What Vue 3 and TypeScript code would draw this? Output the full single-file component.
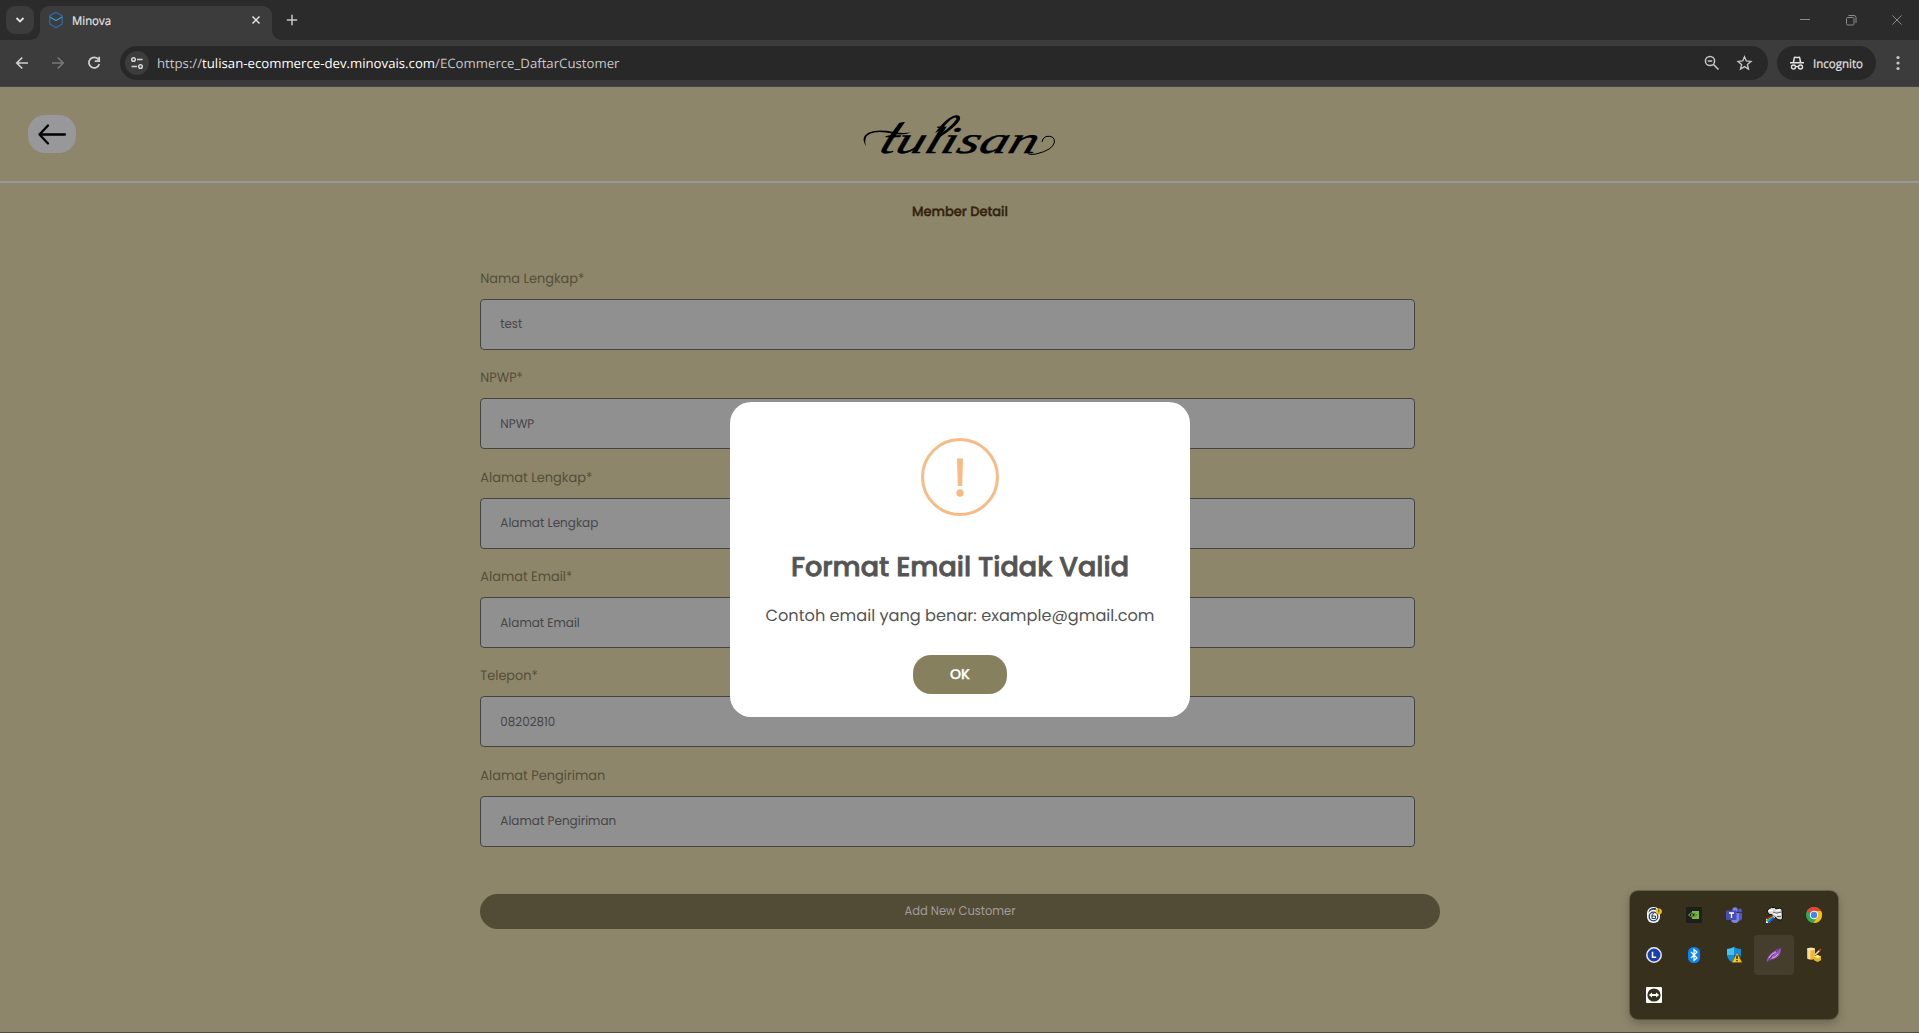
<script setup lang="ts">
interface Field { label: string; value: string; lw: number; vw: number }
const fields: Field[] = [
  { label: 'Nama Lengkap*', value: 'test', lw: 104, vw: 22 },
  { label: 'NPWP*', value: 'NPWP', lw: 42.5, vw: 34 },
  { label: 'Alamat Lengkap*', value: 'Alamat Lengkap', lw: 112, vw: 98 },
  { label: 'Alamat Email*', value: 'Alamat Email', lw: 92, vw: 79.5 },
  { label: 'Telepon*', value: '08202810', lw: 57.5, vw: 55 },
  { label: 'Alamat Pengiriman', value: 'Alamat Pengiriman', lw: 125, vw: 116 },
]
</script>

<template>
  <div class="screen">
    <div class="tabs">
      <div class="tabsearch"><svg width="10" height="8" viewBox="0 0 10 8"><path d="M1.5 2 5 5.5 8.5 2" fill="none" stroke="#e3e3e3" stroke-width="1.8" /></svg></div>
      <div class="tab">
        <svg class="fav" width="16" height="18" viewBox="0 0 16 18"><path d="M8 1.300 14.200 4.800v8.200L8 16.700 1.800 13V4.800Z" fill="none" stroke="#2f6da8" stroke-width="1.200" /><path d="M2 6 8 9.500 14 6" fill="none" stroke="#2f9ac6" stroke-width="1.300" /></svg>
        <svg class="tt" width="42" height="20"><text x="0" y="15" textLength="39" lengthAdjust="spacingAndGlyphs">Minova</text></svg>
        <svg class="x" width="10" height="10" viewBox="0 0 10 10"><path d="m1.500 1.500 7 7m0-7-7 7" stroke="#e3e3e3" stroke-width="1.500" /></svg>
      </div>
      <svg class="plus" width="12" height="12" viewBox="0 0 12 12"><path d="M6 .8v10.400M.8 6h10.400" stroke="#c7c7c7" stroke-width="1.500" /></svg>
      <svg class="wins" width="104" height="14" viewBox="0 0 104 14" fill="none" stroke="#8b8b8b"><path d="M1 6.500h10" /><rect x="47.500" y="4.500" width="7.500" height="7.500" rx="1.200" /><path d="M49.500 2.500h5.500q2 0 2 2v5.500M93.500 2.500l9 9m0-9-9 9" /></svg>
    </div>
    <div class="toolbar">
      <svg class="nav" width="108" height="24" viewBox="0 0 108 24" fill="none" stroke-width="1.700">
        <path d="M28 12H16.800M22.300 6.500 16.800 12l5.500 5.500" stroke="#d0d0d0" />
        <path d="M52 12h11.200M57.700 6.500 63.200 12l-5.500 5.500" stroke="#777" />
        <path d="M98.500 8.500A5.300 5.300 0 1 0 99.300 13M99.200 5.800v4.400h-4.400" stroke="#d0d0d0" />
      </svg>
      <div class="omni">
        <div class="tune"><svg width="14" height="14" viewBox="0 0 14 14" fill="none" stroke="#d5d5d5" stroke-width="1.500"><circle cx="3.500" cy="3.500" r="1.800" /><path d="M7 3.500h5.500M1.500 10.500H7" /><circle cx="10.500" cy="10.500" r="1.800" /></svg></div>
        <svg class="url" width="480" height="24"><text x="0" y="17" textLength="462.500" lengthAdjust="spacingAndGlyphs"><tspan fill="#c7c7c7">https://</tspan><tspan fill="#fff">tulisan-ecommerce-dev.minovais.com</tspan><tspan fill="#c7c7c7">/ECommerce_DaftarCustomer</tspan></text></svg>
        <svg class="omniicons" width="48" height="16" viewBox="0 0 48 16" fill="none" stroke="#c7c7c7" stroke-width="1.500"><circle cx="6" cy="6" r="4.600" /><path d="M3.800 6h4.400M9.500 9.500l5 5" /><path d="m40.500 1.700 1.800 4.300 4.700.4-3.600 3.100 1.100 4.600-4-2.500-4 2.500 1.100-4.600L34 6.400l4.700-.4Z" stroke-width="1.300" /></svg>
      </div>
      <div class="incog">
        <svg width="14" height="14" viewBox="0 0 14 14"><path d="M3.700 1.200Q4 .2 5 .5q2 .6 4 0 1-.3 1.300.7L11.300 6H14v1.400H0V6h2.700Z M5 2 4.300 6h5.400L9 2Q7 2.400 5 2Z" fill="#e3e3e3" fill-rule="evenodd" /><g fill="none" stroke="#e3e3e3" stroke-width="1.400"><circle cx="3.500" cy="11" r="2" /><circle cx="10.500" cy="11" r="2" /><path d="M5.500 10.800q1.500-.9 3 0" /></g></svg>
        <svg class="it" width="52" height="20"><text x="0" y="14.500" textLength="50" lengthAdjust="spacingAndGlyphs">Incognito</text></svg>
      </div>
      <svg class="dots" width="4" height="16" viewBox="0 0 4 16" fill="#c7c7c7"><circle cx="2" cy="2.500" r="1.600" /><circle cx="2" cy="8" r="1.600" /><circle cx="2" cy="13.500" r="1.600" /></svg>
    </div>

    <header class="head">
      <div class="back"><svg width="30" height="22" viewBox="0 0 30 22"><path d="M28 11.500H2.500M11 2.500 2.500 11.500l8.500 9" fill="none" stroke="#000" stroke-width="2.300" stroke-linecap="round" stroke-linejoin="round" /></svg></div>
      <svg class="logo" width="196" height="48" viewBox="0 0 196 48">
        <g transform="translate(16 40) skewX(-18)"><text x="0" y="0" textLength="157" lengthAdjust="spacingAndGlyphs">tulisan</text></g>
        <!-- flourishes around the wordmark: crossbar, raised stems, trailing curl -->
        <path d="M4 33Q-2 24 7 19.500q8-3.500 25-.5 8 1.500 17 .5-8 3-18 1.200-15-3.200-23 0-7 3.300-4 12.300Z" />
        <path d="M27 24 37 10q3-1 6-1L32 25Z" />
        <path d="M73 20C80 10 88 3 94 2.200q5-.2 4 4Q95 13 78 24l-1-2Q90 13 94.500 6q0-2.500-3-1Q86 8 80 16Z" />
        <path d="M166 39q-1 3.500 8 2 17-4 18.500-12 0-7-8.500-5.500-4 2-4 5.500" fill="none" stroke="#000" stroke-width="1" />
      </svg>
    </header>

    <main>
      <svg class="heading" width="96" height="20"><text x="0" y="14.300" textLength="96" lengthAdjust="spacingAndGlyphs">Member Detail</text></svg>
      <form class="form">
        <div v-for="f in fields" :key="f.label" class="field">
          <svg class="label" width="200" height="24"><text x=".3" y="16.300" :textLength="f.lw" lengthAdjust="spacingAndGlyphs">{{ f.label }}</text></svg>
          <div class="input"><svg width="200" height="24"><text x=".3" y="16" :textLength="f.vw" lengthAdjust="spacingAndGlyphs">{{ f.value }}</text></svg></div>
        </div>
        <div class="submit"><svg width="114" height="20"><text x="1.500" y="14.300" textLength="111" lengthAdjust="spacingAndGlyphs">Add New Customer</text></svg></div>
      </form>
    </main>
    <div class="edge"></div>

    <div class="modal">
      <svg class="warn" width="78" height="78" viewBox="0 0 78 78"><circle cx="39" cy="39" r="37.500" fill="none" stroke="#f8bb86" stroke-width="3" /><path d="M36 20.500h6l-.8 27.500h-4.400Z" fill="#f8bb86" /><circle cx="39" cy="55" r="3.700" fill="#f8bb86" /></svg>
      <svg class="title" width="340" height="40"><text x="1" y="30" textLength="338" lengthAdjust="spacingAndGlyphs">Format Email Tidak Valid</text></svg>
      <svg class="msg" width="392" height="30"><text x="1.500" y="21" textLength="389" lengthAdjust="spacingAndGlyphs">Contoh email yang benar: example@gmail.com</text></svg>
      <div class="ok"><svg width="22" height="20"><text x="1" y="14" textLength="20" lengthAdjust="spacingAndGlyphs">OK</text></svg></div>
    </div>

    <div class="tray">
      <div class="cell"><svg width="16" height="16" viewBox="0 0 16 16"><rect x="1" y="0" width="13" height="16" rx="6" fill="#f4f6f8" /><path d="M2.500 5Q7 0 12 4M3 3.500q3-3 7-2" fill="none" stroke="#25406b" /><circle cx="7.500" cy="9.500" r="4.300" fill="none" stroke="#25406b" stroke-width="1.300" /><path d="M5.500 9h4v2.500H6V8q0-1.500 2-1.500" fill="none" stroke="#25406b" /><circle cx="12.800" cy="4.500" r="3" fill="#ffc107" /><path d="M12.800 2.500v2.300m0 .8v.8" stroke="#333" /></svg></div>
      <div class="cell"><svg width="16" height="16" viewBox="0 0 16 16"><path d="M0 0h16v16H0Z" fill="#1e1e1e" /><path d="M6 4h7v8H6Z" fill="#76b83f" /><path d="M2.500 8Q7 3 11.500 8 7 12.500 2.500 8Z" fill="#1e1e1e" stroke="#76b83f" stroke-width=".9" /><path d="M5 8q2.500-3 5 0-2.500 3-5 0Z" fill="none" stroke="#76b83f" /></svg></div>
      <div class="cell"><svg width="16" height="16" viewBox="0 0 16 16"><circle cx="9" cy="3" r="2.700" fill="#7b83eb" /><circle cx="14" cy="3.500" r="1.900" fill="#5059c9" /><path d="M11 6h5v5q0 3-4 3Z" fill="#5059c9" /><path d="M5 6h8v6q0 4-4 4t-4-4Z" fill="#7b83eb" /><rect y="3.500" width="10.500" height="9.500" rx="1" fill="#464eb8" /><path d="M3 6h5M5.500 6v5" stroke="#fff" stroke-width="1.300" /></svg></div>
      <div class="cell"><svg width="17" height="16" viewBox="0 0 17 16"><path d="M1.500 4.500V3l2-1.500 2-1h3l1.500 1.500 4-1 2 1.500.500 9-2 1.500-3-.500-1.500-2-2-.500-1.500-2-4-1Z" fill="#d8d8d8" stroke="#0a0a0a" stroke-width="1" /><path d="M3 3.500h4M10 3.500l4-.500M8 6.500l3 1.500M12 7h3" stroke="#fff" stroke-width="1.600" /><path d="M7 5l3 1.200 5-1M11 9.500h4" stroke="#333" stroke-width=".7" fill="none" /><path d="m0 12 7-3.500 2 2L3 16H0Z" fill="#fff" /><path d="m.5 12 6-3" stroke="#e02" stroke-width="1.400" /><path d="m.5 14 7-4" stroke="#0c3" stroke-width="1.700" /><path d="m2 15.500 6-4.500" stroke="#14f" stroke-width="1.600" /></svg></div>
      <div class="cell"><svg width="16" height="16" viewBox="0 0 16 16"><circle cx="8" cy="8" r="8" fill="#34a853" /><path d="M8 8 1.100 4A8 8 0 0 1 15 4Z" fill="#ea4335" /><path d="M8 4h7A8 8 0 0 1 7.500 16L11.500 10Z" fill="#fbbc04" /><circle cx="8" cy="8" r="4.200" fill="#fff" /><circle cx="8" cy="8" r="3.200" fill="#4285f4" /></svg></div>
      <div class="cell"><svg width="16" height="16" viewBox="0 0 16 16"><circle cx="8" cy="8" r="7.200" fill="#1d3fae" stroke="#e8ebf2" stroke-width="1.500" /><path d="M6.500 4.800v5.500h3.700" fill="none" stroke="#fff" stroke-width="1.500" /></svg></div>
      <div class="cell"><svg width="16" height="16" viewBox="0 0 16 16"><rect x="2" width="12" height="16" rx="5.500" fill="#0a84f8" /><path d="m5 5 6 6-3 2.500v-11L11 5l-6 6" fill="none" stroke="#fff" stroke-width="1.200" /></svg></div>
      <div class="cell"><svg width="16" height="16" viewBox="0 0 16 16"><path d="M8 0Q11 2 15 2v6q0 5-7 8Q1 13 1 8V2q4 0 7-2Z" fill="#168bd8" /><path d="M8 0v8H1V2q4 0 7-2Z" fill="#43c4ee" /><path d="M8 8h7q0 5-7 8Z" fill="#0864b8" /><path d="m11 5.500 5 10H6Z" fill="#ffc40c" stroke="#705400" stroke-width=".4" /><path d="M11 8.500v3.500m0 1v1.300" stroke="#111" stroke-width="1.300" /></svg></div>
      <div class="cell sel"><svg width="16" height="16" viewBox="0 0 16 16"><path d="M.8 15.500C1 8 6 5 15 .5c0 6-2 11-10 12Z" fill="#9c59bd" /><path d="M1 15.500Q5 8 15 .5" fill="none" stroke="#5e2b80" /><path d="M3 11Q5 7 10 5M6 11q4-1 6-4" fill="none" stroke="#d8b2ea" /></svg></div>
      <div class="cell"><svg width="16" height="16" viewBox="0 0 16 16"><path d="M1 2q4-2.500 8 0v9.500q-4 2.500-8 0Z" fill="#efb643" /><path d="M3.300 2.500v9.500" stroke="#ffe79d" stroke-width="2" /><ellipse cx="5" cy="2" rx="4" ry="1.300" fill="#ffe9a8" /><path d="m9 8 4.500-4.500" stroke="#f2d7a0" stroke-width="1.700" /><path d="m13 4 2-2" stroke="#ba4a36" stroke-width="1.600" /><path d="m8 9.500 3.500-1.500L15 9.500v3.700l-3.500 1.800L8 13.200Z" fill="#dfb91f" /><path d="m8 9.500 3.500-1.500L15 9.500l-3.500 1.800Z" fill="#fff08a" /></svg></div>
      <div class="cell"><svg width="16" height="16" viewBox="0 0 16 16"><rect width="16" height="16" rx="1" fill="#fff" /><circle cx="8" cy="8" r="6.600" fill="#342e1c" /><path d="m2.800 8 3.200-2.600v1.600h4V5.400L13.200 8 10 10.600V9H6v1.600Z" fill="#fff" /></svg></div>
    </div>
  </div>
</template>

<style>
body { margin: 0; overflow: hidden; }
</style>
<style scoped>
* { box-sizing: border-box; }
svg { display: block; flex: none; overflow: visible; }
text { text-rendering: geometricPrecision; }
.screen { position: relative; width: 1919px; height: 1033px; display: flex; flex-direction: column; background: #8d866b; font-family: Poppins, Inter, sans-serif; overflow: hidden; }
.tabs { height: 40px; background: #2b2b2b; display: flex; align-items: center; padding-left: 6px; flex: none; font: 12px "Segoe UI", "Open Sans", sans-serif; }
.tabsearch { width: 28px; height: 28px; border-radius: 9px; background: #3c3c3c; display: grid; place-items: center; }
.tab { width: 232px; height: 34px; margin: 6px 0 0 6px; border-radius: 9px 9px 0 0; background: #3c3c3c; display: flex; align-items: center; padding: 0 11px 6px 8px; position: relative; }
.tab::before, .tab::after { content: ""; position: absolute; bottom: 0; width: 9px; height: 9px; }
.tab::before { left: -9px; background: radial-gradient(circle at 0 0, #2b2b2b 8.500px, #3c3c3c 9px); }
.tab::after { right: -9px; background: radial-gradient(circle at 100% 0, #2b2b2b 8.500px, #3c3c3c 9px); }
.tt { margin-left: 8px; fill: #e3e3e3; stroke: #e3e3e3; stroke-width: .2px; }
.x { margin-left: auto; }
.plus { margin-left: 14px; }
.wins { margin-left: auto; margin-right: 16px; }
.toolbar { height: 47px; background: #3c3c3c; border-bottom: 1px solid #48484a; display: flex; align-items: center; flex: none; font: 13px "Segoe UI", "Open Sans", sans-serif; }
.omni { width: 1648px; height: 34px; margin-left: 12px; border-radius: 17px; background: #282828; display: flex; align-items: center; padding: 0 16px 0 5px; }
.tune { width: 24px; height: 24px; border-radius: 12px; background: #3c3c3c; display: grid; place-items: center; }
.url { margin-left: 8px; }
.omniicons { margin-left: auto; }
.incog { width: 99px; height: 34px; margin-left: 9px; border-radius: 17px; background: #282828; display: flex; align-items: center; padding-left: 13px; }
.it { margin-left: 9px; fill: #e3e3e3; font-size: 12px; stroke: #e3e3e3; stroke-width: .2px; }
.dots { margin-left: 20px; }
.head { height: 96px; border-bottom: 2px solid #99989a; display: flex; align-items: center; flex: none; padding-left: 28px; }
.back { width: 48px; height: 38px; border-radius: 17px; background: #98989a; display: grid; place-items: center; }
.logo { margin-left: 786px; margin-top: 6px; font: italic 38px "Liberation Serif", serif; }
.logo text { stroke: #000; stroke-width: .4px; }
main { flex: 1; display: flex; flex-direction: column; align-items: center; }
.heading { margin-top: 19px; font-size: 13.300px; font-weight: 500; fill: #33230c; stroke: #33230c; stroke-width: .4px; }
.form { width: 960px; margin-top: 44.850px; }
.field { height: 99.400px; }
.label { margin-bottom: 8px; font-size: 13.500px; fill: #554e38; }
.input { width: 935px; height: 51px; border: 1px solid #444; border-radius: 4px; background: #909090; display: flex; align-items: center; padding-left: 19.500px; font-size: 12.600px; fill: #464648; }
.submit { height: 35px; margin-top: 30.600px; border-radius: 18px; background: #524c37; display: grid; place-items: center; font-size: 12.600px; fill: #a09d98; }
.edge { height: 1px; background: #4e4a40; flex: none; }
.modal { position: absolute; left: 730px; top: 402px; width: 460px; height: 315px; border-radius: 21px; background: #fff; display: flex; flex-direction: column; align-items: center; padding-top: 36px; }
.title { margin-top: 30px; font-size: 27px; font-weight: 500; fill: #545454; stroke: #545454; stroke-width: .8px; }
.msg { margin-top: 14px; font-size: 16.200px; fill: #545454; }
.ok { width: 94px; height: 39px; margin-top: 25px; border-radius: 18px; background: #87805e; display: grid; place-items: center; font-size: 14px; font-weight: 500; fill: #fff; stroke: #fff; stroke-width: .3px; }
.tray { position: absolute; left: 1630px; top: 891px; width: 208px; height: 128px; border-radius: 8px; background: #37301d; display: grid; grid-template-columns: repeat(5, 40px); grid-auto-rows: 40px; padding: 4px; box-shadow: 0 4px 10px rgba(0, 0, 0, .25), 0 0 0 1px rgba(60, 55, 38, .4); }
.cell { display: grid; place-items: center; border-radius: 4px; }
.sel { background: #453e2c; }
</style>
